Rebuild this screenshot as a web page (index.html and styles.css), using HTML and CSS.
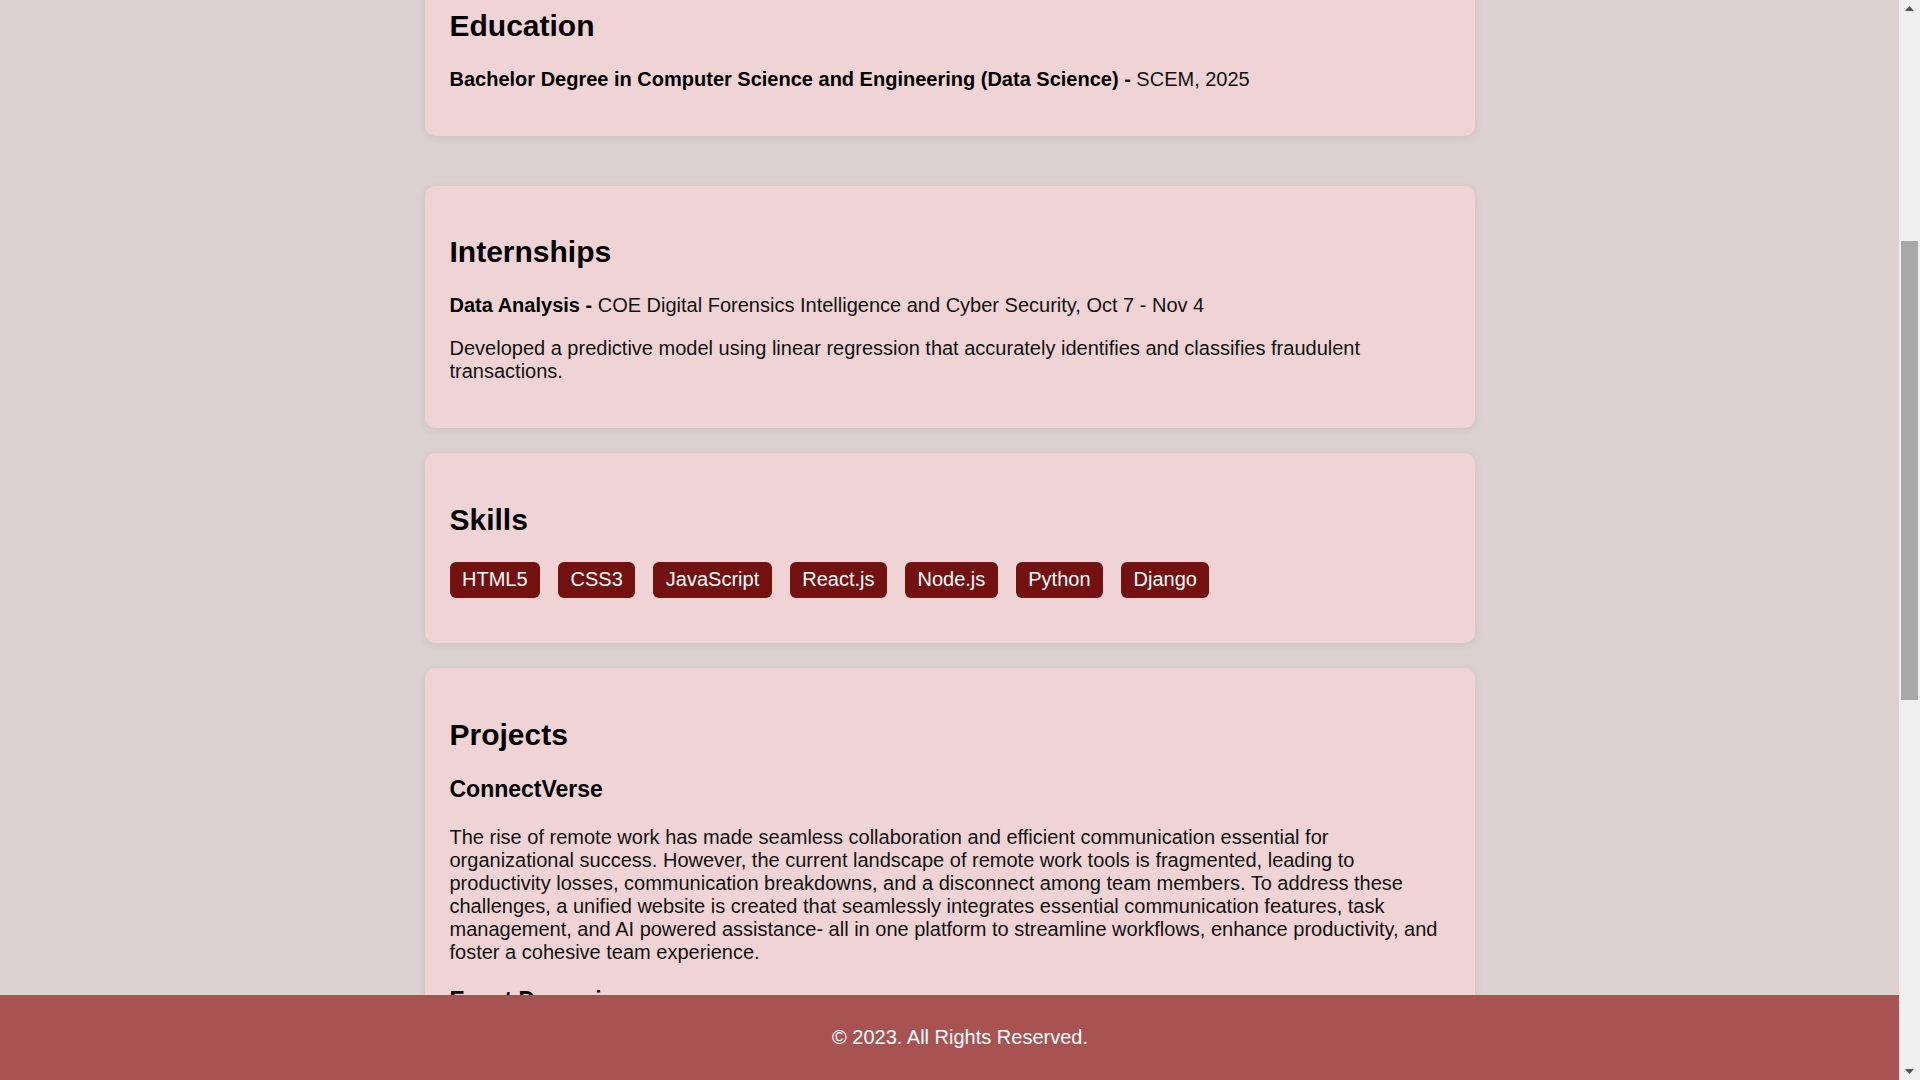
FILE: index.html
```html
<!DOCTYPE html>
<html lang="en">
<head>
<meta charset="utf-8">
<title>Resume</title>
<link rel="stylesheet" href="styles.css">
</head>
<body>
<header class="site-header">
  <h1 class="site-title">Portfolio</h1>
  <p class="site-subtitle">Computer Science and Engineering (Data Science)</p>
</header>

<main class="container">
  <section class="card">
    <h2>About Me</h2>
    <p>Aspiring data scientist and web developer with a passion for building useful, data-driven applications and clean, responsive interfaces.</p>
    <p>Interested in machine learning, analytics and full-stack development.</p>
  </section>

  <section class="card card--spaced" id="education">
    <h2>Education</h2>
    <p><strong>Bachelor Degree in Computer Science and Engineering (Data Science) -</strong> SCEM, 2025</p>
  </section>

  <section class="card">
    <h2>Internships</h2>
    <p><strong>Data Analysis -</strong> COE Digital Forensics Intelligence and Cyber Security, Oct 7 - Nov 4</p>
    <p>Developed a predictive model using linear regression that accurately identifies and classifies fraudulent transactions.</p>
  </section>

  <section class="card">
    <h2>Skills</h2>
    <div class="skills">
      <span class="skill">HTML5</span>
      <span class="skill">CSS3</span>
      <span class="skill">JavaScript</span>
      <span class="skill">React.js</span>
      <span class="skill">Node.js</span>
      <span class="skill">Python</span>
      <span class="skill">Django</span>
    </div>
  </section>

  <section class="card">
    <h2>Projects</h2>
    <h3>ConnectVerse</h3>
    <p>The rise of remote work has made seamless collaboration and efficient communication essential for organizational success. However, the current landscape of remote work tools is fragmented, leading to productivity losses, communication breakdowns, and a disconnect among team members. To address these challenges, a unified website is created that seamlessly integrates essential communication features, task management, and AI powered assistance- all in one platform to streamline workflows, enhance productivity, and foster a cohesive team experience.</p>
    <h3>Event Dynamics</h3>
    <p>A web application for planning and managing events, with registration, scheduling and real-time updates for participants and organizers.</p>
    <h3>Fraud Detection</h3>
    <p>A machine learning model that classifies fraudulent transactions using regression techniques on transaction data.</p>
  </section>

  <section class="card">
    <h2>Contact</h2>
    <p>Email: student@example.com</p>
    <p>Phone: +91 00000 00000</p>
  </section>
</main>

<footer class="site-footer">
  <p>&copy; 2023. All Rights Reserved.</p>
</footer>

<div class="scrollbar" aria-hidden="true">
  <div class="scrollbar-btn">
    <svg width="9" height="5" viewBox="0 0 9 5"><polygon points="0,5 4.5,0 9,5" fill="#505050"/></svg>
  </div>
  <div class="scrollbar-track">
    <div class="scrollbar-gap"></div>
    <div class="scrollbar-thumb"></div>
  </div>
  <div class="scrollbar-btn">
    <svg width="9" height="5" viewBox="0 0 9 5"><polygon points="0,0 9,0 4.5,5" fill="#505050"/></svg>
  </div>
</div>

<script src="script.js"></script>
</body>
</html>
```

FILE: styles.css
```css
html {
  scroll-behavior: auto;
}

body {
  margin: 0;
  padding-right: 21px;
  background: #dbd1d0;
  color: #111;
  font-family: "Liberation Sans", Arial, sans-serif;
  font-size: 20px;
}

.site-header {
  background: #a85252;
  color: #fff;
  text-align: center;
  padding: 40px 20px;
}

.site-title {
  margin: 0 0 10px;
  font-size: 40px;
}

.site-subtitle {
  margin: 0;
}

.container {
  width: 1050px;
  box-sizing: border-box;
  margin: 0 auto;
  padding: 25px 0 160px;
  display: flex;
  flex-direction: column;
  gap: 25px;
}

.card {
  background: #f0d3d5;
  border-radius: 10px;
  padding: 25px;
  box-shadow: 0 2px 8px rgba(0, 0, 0, 0.08);
}

.card--spaced {
  margin-bottom: 25px;
}

.card h2 {
  font-size: 30px;
  margin: 24.9px 0;
  color: #000;
}

.card h3 {
  font-size: 23px;
  margin: 23px 0;
  color: #000;
}

.card p {
  margin: 20px 0;
}

.card strong {
  color: #000;
}

.skills {
  display: flex;
  flex-wrap: wrap;
  gap: 18px;
  margin-bottom: 20px;
}

.skill {
  background: #731111;
  color: #fff;
  padding: 6.25px 12.5px;
  border-radius: 6px;
  line-height: 23px;
}

.site-footer {
  position: fixed;
  left: 0;
  bottom: 0;
  width: 100vw;
  height: 85px;
  background: #a85252;
  color: #fff;
  display: flex;
  align-items: center;
  justify-content: center;
}

.site-footer p {
  margin: 0;
}

/* classic window scrollbar strip */
.scrollbar {
  position: fixed;
  top: 0;
  right: 0;
  width: 21px;
  height: 100vh;
  background: #f0f0f0;
  display: flex;
  flex-direction: column;
  z-index: 10;
}

.scrollbar-btn {
  height: 17px;
  display: flex;
  align-items: center;
  justify-content: center;
  flex: none;
}

.scrollbar-track {
  flex: 1;
  display: flex;
  flex-direction: column;
  padding: 0 2px;
}

.scrollbar-gap {
  height: 224px;
  flex: none;
}

.scrollbar-thumb {
  height: 459px;
  background: #a8a8a8;
  flex: none;
}
```

FILE: script.js
```js
(function () {
  function place() {
    var edu = document.getElementById('education');
    if (edu) {
      window.scrollTo(0, edu.offsetTop + 41);
    }
  }
  place();
  window.addEventListener('load', place);
})();
```
